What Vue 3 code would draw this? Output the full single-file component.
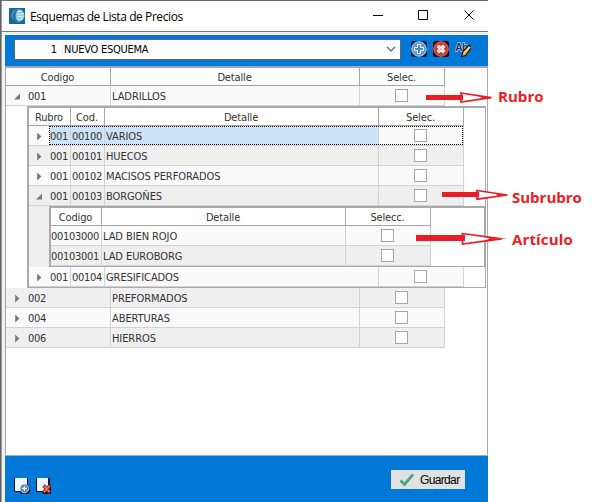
<script setup>
const mainRows = [
  { code: '002', detail: 'PREFORMADOS' },
  { code: '004', detail: 'ABERTURAS' },
  { code: '006', detail: 'HIERROS' },
]
const subRows = [
  { code: '00100', detail: 'VARIOS', selected: true },
  { code: '00101', detail: 'HUECOS' },
  { code: '00102', detail: 'MACISOS PERFORADOS' },
  { code: '00103', detail: 'BORGOÑES', open: true },
]
const articles = [
  { code: '00103000', detail: 'LAD BIEN ROJO' },
  { code: '00103001', detail: 'LAD EUROBORG' },
]
</script>

<template>
  <div class="screen">
    <div class="window">
      <header class="titlebar">
        <svg class="app-icon" width="16" height="16" viewBox="0 0 16 16">
          <rect width="16" height="16" fill="#146a91" />
          <circle cx="9" cy="7.500" r="6.500" fill="#8fc3de" />
          <path d="M9 1C2 2 1 12 8 15L10 14C5 11 6 4 10 1Z" fill="#2377a5" />
          <path d="M8 4l5-1M8 6.500l7-1M8 9l7-1M9 11.500l5-1" stroke="#e2f1f8" fill="none" />
        </svg>
        <span class="title">Esquemas de Lista de Precios</span>
        <svg class="controls" width="112" height="12" viewBox="0 0 112 12" fill="none" stroke="#000">
          <path d="M0 5.500H10M45.500 .5h9v9h-9zM91.500 .5l9 9M100.500 .5l-9 9" />
        </svg>
      </header>

      <div class="body">
        <div class="toolbar">
          <div class="combo">
            <span class="num">1</span><span class="name">NUEVO ESQUEMA</span>
            <svg width="10" height="6" viewBox="0 0 10 6"><path d="M1 .8l4 4 4-4" fill="none" stroke="#555" stroke-width="1.200" /></svg>
          </div>
          <svg width="16" height="16" viewBox="0 0 16 16">
            <rect width="16" height="16" rx="2.500" fill="#0a1b33" />
            <circle cx="8" cy="8" r="7.300" fill="#5c9bd8" stroke="#b5d5f2" />
            <path d="M6.500 3.500h3v3h3v3h-3v3h-3v-3h-3v-3h3z" fill="#4c86c8" stroke="#fff" />
          </svg>
          <svg width="16" height="16" viewBox="0 0 16 16">
            <rect width="16" height="16" rx="2.500" fill="#2a0808" />
            <circle cx="8" cy="8" r="7.300" fill="#d03a34" stroke="#e0645c" />
            <path d="M4.800 4.800l6.400 6.400M11.200 4.800l-6.400 6.400" stroke="#fff" stroke-width="3.600" />
            <path d="M5.500 5.500l5 5M10.500 5.500l-5 5" stroke="#e9b9b5" stroke-width="1" />
          </svg>
          <svg width="16" height="16" viewBox="0 0 16 16">
            <text x="0" y="9.500" class="ab">Ab</text>
            <path d="M6.500 15.500l1.500-5 6-6.500 2.500 2.500-6 8z" fill="#f2b84b" stroke="#111" stroke-width="1.200" />
            <path d="M9.500 11.500l4.500-5" stroke="#ffe6a2" />
          </svg>
        </div>

        <div class="grid">
          <div class="row head main">
            <div class="cell">Codigo</div><div class="cell">Detalle</div><div class="cell">Selec.</div>
          </div>
          <div class="row main">
            <div class="cell code"><i class="tri open"></i>001</div>
            <div class="cell">LADRILLOS</div>
            <div class="cell check"><b class="box"></b></div>
          </div>

          <div class="nested">
            <div class="row head sub">
              <div class="cell">Rubro</div><div class="cell">Cod.</div><div class="cell">Detalle</div><div class="cell">Selec.</div>
            </div>
            <div v-for="(r, i) in subRows" :key="r.code" class="row sub" :class="{ alt: i % 2, selected: r.selected }">
              <div class="cell code"><i class="tri" :class="{ open: r.open }"></i>001</div>
              <div class="cell digits">{{ r.code }}</div>
              <div class="cell">{{ r.detail }}</div>
              <div class="cell check"><b class="box"></b></div>
            </div>

            <div class="gutter">
              <div class="nested deep">
                <div class="row head art">
                  <div class="cell">Codigo</div><div class="cell">Detalle</div><div class="cell">Selecc.</div>
                </div>
                <div v-for="(r, i) in articles" :key="r.code" class="row art" :class="{ alt: i % 2 }">
                  <div class="cell digits flush">{{ r.code }}</div>
                  <div class="cell">{{ r.detail }}</div>
                  <div class="cell check"><b class="box"></b></div>
                </div>
              </div>
            </div>

            <div class="row sub">
              <div class="cell code"><i class="tri"></i>001</div>
              <div class="cell digits">00104</div>
              <div class="cell">GRESIFICADOS</div>
              <div class="cell check"><b class="box"></b></div>
            </div>
          </div>

          <div v-for="(r, i) in mainRows" :key="r.code" class="row main" :class="{ alt: i % 2 === 0 }">
            <div class="cell code"><i class="tri"></i>{{ r.code }}</div>
            <div class="cell">{{ r.detail }}</div>
            <div class="cell check"><b class="box"></b></div>
          </div>
        </div>

        <footer class="footer">
          <svg width="16" height="16" viewBox="0 0 16 16">
            <path d="M0 0h14v7l2 2v5l-2 2H7l-1-2H0z" fill="#06142c" />
            <path d="M1 0h12v13H1z" fill="#f0f4ff" />
            <circle cx="10.500" cy="10.500" r="4.300" fill="#4386cb" stroke="#b9d4ef" />
            <path d="M10.500 8v5M8 10.500h5" stroke="#fff" stroke-width="1.300" />
          </svg>
          <svg width="16" height="16" viewBox="0 0 16 16">
            <path d="M0 0h14v7l1 1v8H7l-1-2H0z" fill="#06142c" />
            <path d="M1 0h11v13H1z" fill="#f0f4ff" />
            <path d="M7.500 7.500l6.500 7M14 7.500l-6.500 7" stroke="#9c211b" stroke-width="3.400" />
            <path d="M8 8l5.500 6M13.500 8L8 14" stroke="#e8736a" stroke-width="1.800" />
          </svg>
          <button class="save">
            <svg width="16" height="14" viewBox="0 0 16 14"><path d="M1.500 7.500l4 4L14 1.500" fill="none" stroke="#4aa583" stroke-width="2.800" /></svg>
            <span>Guardar</span>
          </button>
        </footer>
      </div>
    </div>

    <svg class="arrows" width="611" height="502" viewBox="0 0 611 502">
      <g fill="#fff" stroke="#ed1c24" stroke-width="1.700">
        <path d="M461 93l30 4.700-30 4.300z" /><path d="M477 190.500l30 4.500-30 4.200z" /><path d="M462.500 233.500l39 5.300-39 5.200z" />
      </g>
      <g fill="#ed1c24">
        <path d="M426 95h37v5h-37z" /><path d="M442 192h37v5h-37z" /><path d="M416 235h49v6h-49z" />
        <path d="M478 96l16 1.700-16 1.600 4-1.600z" /><path d="M494 193.300l16 1.700-16 1.600 4-1.600z" /><path d="M484 237l23 1.800-23 1.800 6-1.800z" />
      </g>
    </svg>
    <span class="label rubro">Rubro</span>
    <span class="label subrubro">Subrubro</span>
    <span class="label articulo">Artículo</span>
  </div>
</template>

<style>
body { background: #fff; }
</style>

<style scoped>
* { box-sizing: border-box; }
.screen { position: relative; width: 611px; height: 502px; overflow: hidden; background: #fff; font-family: "DejaVu Sans Condensed", "DejaVu Sans", sans-serif; font-stretch: condensed; font-size: 11px; letter-spacing: -.08px; color: #333; }
.window { width: 488px; height: 502px; border-top: 1px solid #6b6b6b; border-left: 1px solid #606367; display: flex; flex-direction: column; }
.titlebar { height: 31px; border-bottom: 1px solid #777; border-left: 1px solid #999; display: flex; align-items: center; padding-left: 7px; flex: none; }
.title { margin-left: 5px; font: 12px "Open Sans", sans-serif; letter-spacing: -.42px; color: #000; white-space: nowrap; }
.controls { margin-left: auto; margin-right: 3px; }
.body { flex: 1; border-left: 1px solid #999; padding: 3px 0 0 3px; background: #f0f0f0; display: flex; flex-direction: column; }
.toolbar { height: 31px; background: #0078d7; display: flex; align-items: center; gap: 6px; padding: 0 17px 3px 9px; flex: none; }
.combo { width: 387px; height: 21px; background: #fff; border: 1px solid #666; display: flex; align-items: center; color: #000; margin-right: 4px; padding-right: 4px; flex: none; }
.combo span { padding-top: 1px; }
.combo svg { margin-left: auto; }
.num { width: 48px; text-align: right; padding-right: 5px; border-right: 1px solid #eee; }
.name { padding-left: 1px; letter-spacing: -.25px; white-space: nowrap; }
.ab { font: bold 10.500px "Liberation Sans", sans-serif; fill: #1f3568; stroke: #c3cfe6; stroke-width: 1.400px; paint-order: stroke; letter-spacing: -.5px; }
.grid { height: 390px; background: #fff; border: 1px solid #a9a9a9; border-top-width: 2px; flex: none; }
.row { display: grid; height: 20px; background: #fafafa; width: max-content; }
.main { grid-template-columns: 105px 249px 85px; }
.sub { grid-template-columns: 42px 34px 274px 85px; }
.art { grid-template-columns: 51px 244px 85px; }
.cell { border-right: 1px solid #d2d2d2; border-bottom: 1px solid #d2d2d2; padding: 2px 0 0 1px; display: flex; align-items: center; white-space: nowrap; overflow: hidden; }
.alt { background: #efefef; }
.head { height: 18px; background: #fff; }
.head .cell { border-color: #a5a5a5; justify-content: center; padding: 1px 1px 0 0; letter-spacing: -.15px; }
.code, .digits { letter-spacing: -.3px; }
.flush { padding-left: 0; }
.main .code { padding-left: 8px; }
.main .code .tri { margin-right: 8px; }
.sub .code { padding-left: 7px; }
.sub .code .tri { margin-right: 8px; }
.row .check { justify-content: center; padding: 0 2px 0 0; }
.box { width: 13px; height: 13px; border: 1px solid #a5a5a5; background: #fff; }
.tri { width: 6px; height: 8px; background: #777; clip-path: polygon(20% 0, 90% 50%, 20% 100%); flex: none; }
.tri.open { height: 6px; clip-path: polygon(100% 0, 100% 100%, 0 100%); }
.nested { margin-left: 21px; border: 2px solid #a9a9a9; border-right-width: 1px; border-bottom-width: 1px; background: #fff; height: 182px; width: 459px; }
.gutter { background: #efefef; padding-left: 20px; height: 61px; }
.deep { margin-left: 0; height: 61px; width: 436px; }
.selected .cell:not(:first-child):not(:last-child) { background: #cce4f7; }
.selected { position: relative; }
.selected .code { background: linear-gradient(90deg, transparent 21px, #cce4f7 21px); }
.selected::after { content: ""; position: absolute; left: 20px; right: 1px; top: 0; bottom: 1px; border: 1px dotted #000; }
.footer { flex: 1; background: #0078d7; display: flex; align-items: flex-start; gap: 6px; padding: 14px 23px 0 9px; }
.footer > svg { margin-top: 8px; }
.save { margin: 0 0 0 auto; width: 74px; height: 19px; border: 0; background: #e1e1e1; padding: 0 0 0 8px; display: flex; align-items: center; gap: 5px; font: 12px "Liberation Sans", sans-serif; color: #000; letter-spacing: -.65px; }
.arrows { position: absolute; left: 0; top: 0; }
.label { position: absolute; font: bold 15px/20px "Open Sans", sans-serif; letter-spacing: .05px; color: #ed1c24; }
.rubro { left: 498px; top: 86px; }
.subrubro { left: 512px; top: 187px; letter-spacing: 0; }
.articulo { left: 512px; top: 229px; letter-spacing: .15px; }
</style>
